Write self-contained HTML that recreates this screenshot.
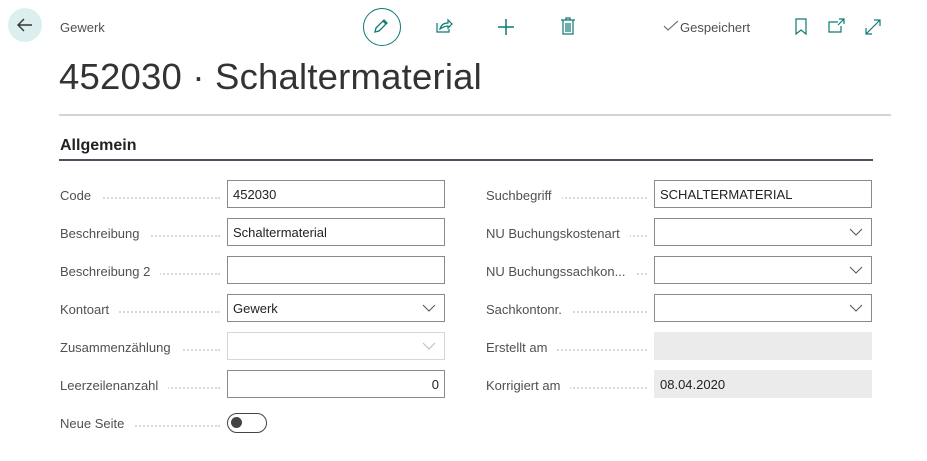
<!DOCTYPE html>
<html><head><meta charset="utf-8"><style>
body{margin:0;width:927px;height:461px;background:#fff;font-family:"Liberation Sans",sans-serif;color:#333;position:relative;overflow:hidden}
.a{position:absolute}
.lbl{position:absolute;font-size:13px;color:#505050;white-space:nowrap;overflow:hidden}
.lbl span{background:#fff;padding-right:10px;position:relative;z-index:1}
.lbl:after{content:"";position:absolute;left:0;right:6px;top:9px;border-bottom:2px dotted #d8d8d8}
.in{position:absolute;height:26px;border:1px solid #8a8a8a;font-size:13px;color:#222;line-height:28px;padding-left:5px;box-sizing:content-box;width:211px}
.dis{border-color:#d6d6d6}
.ro{border:1px solid #ebebeb;background:#ebebeb}
.chev{position:absolute;right:8px;top:7px}
</style></head><body>
<div class="a" style="left:8px;top:8px;width:34px;height:34px;border-radius:50%;background:#dcefef"></div>
<svg class="a" style="left:15px;top:15px" width="20" height="20" viewBox="0 0 20 20"><path d="M17 10H3M9 4L3 10l6 6" stroke="#333" stroke-width="1.4" fill="none"/></svg>
<div class="a" style="left:60px;top:20px;font-size:13px;color:#505050">Gewerk</div>
<div class="a" style="left:363px;top:8px;width:36px;height:36px;border:1.3px solid #0b7a75;border-radius:50%"></div>
<svg class="a" style="left:372px;top:17px" width="18" height="18" viewBox="0 0 18 18"><path d="M3 15l1-4 8-8 3 3-8 8z M11 4l3 3" stroke="#0b7a75" stroke-width="1.3" fill="none"/></svg>
<svg class="a" style="left:435px;top:18px" width="18" height="16" viewBox="0 0 18 16"><path d="M2 5v9h12v-3 M5 11c1-4 4-6 8-6V2l4 4-4 4V8c-3 0-5 1-8 3z" stroke="#0b7a75" stroke-width="1.2" fill="none"/></svg>
<svg class="a" style="left:497px;top:18px" width="18" height="18"><path d="M9 1v16M1 9h16" stroke="#0b7a75" stroke-width="1.5"/></svg>
<svg class="a" style="left:560px;top:17px" width="16" height="18" viewBox="0 0 16 18"><path d="M1 3h14M6 3V1h4v2M3 3v14h10V3M6 6v9M8 6v9M10 6v9" stroke="#0b7a75" stroke-width="1.2" fill="none"/></svg>
<svg class="a" style="left:663px;top:20px" width="16" height="12"><path d="M1 6l4 4L15 1" stroke="#666" stroke-width="1.1" fill="none"/></svg>
<div class="a" style="left:680px;top:20px;font-size:13px;color:#505050">Gespeichert</div>
<svg class="a" style="left:794px;top:18px" width="14" height="18"><path d="M2 1h10v15l-5-4-5 4z" stroke="#0b7a75" stroke-width="1.2" fill="none"/></svg>
<svg class="a" style="left:828px;top:18px" width="18" height="16"><path d="M10 4H1v10h12V8 M11 1h5v5M16 1l-6 6" stroke="#0b7a75" stroke-width="1.2" fill="none"/></svg>
<svg class="a" style="left:864px;top:18px" width="18" height="18"><path d="M2 16L16 2M10 2h6v6M2 10v6h6" stroke="#0b7a75" stroke-width="1.2" fill="none"/></svg>
<div class="a" style="left:59px;top:56px;font-size:36.5px;color:#333;letter-spacing:0.2px">452030 · Schaltermaterial</div>
<div class="a" style="left:59px;top:114px;width:832px;height:2px;background:#d4d4d4"></div>
<div class="a" style="left:60px;top:137px;font-size:16px;font-weight:bold;color:#222">Allgemein</div>
<div class="a" style="left:59px;top:159px;width:814px;height:2px;background:#4a5160"></div>

<div class="lbl" style="left:60px;top:188px;width:166px"><span>Code</span></div>
<div class="in" style="left:227px;top:180px">452030</div>
<div class="lbl" style="left:60px;top:226px;width:166px"><span>Beschreibung</span></div>
<div class="in" style="left:227px;top:218px">Schaltermaterial</div>
<div class="lbl" style="left:60px;top:264px;width:166px"><span>Beschreibung 2</span></div>
<div class="in" style="left:227px;top:256px"></div>
<div class="lbl" style="left:60px;top:302px;width:166px"><span>Kontoart</span></div>
<div class="in" style="left:227px;top:294px">Gewerk<svg class="chev" width="14" height="12"><path d="M1 3l6 6 6-6" stroke="#555" fill="none"/></svg></div>
<div class="lbl" style="left:60px;top:340px;width:166px"><span>Zusammenzählung</span></div>
<div class="in dis" style="left:227px;top:332px"><svg class="chev" width="14" height="12"><path d="M1 3l6 6 6-6" stroke="#bbb" fill="none"/></svg></div>
<div class="lbl" style="left:60px;top:378px;width:166px"><span>Leerzeilenanzahl</span></div>
<div class="in" style="left:227px;top:370px;text-align:right;padding:0 5px 0 0">0</div>
<div class="lbl" style="left:60px;top:416px;width:166px"><span>Neue Seite</span></div>
<div class="a" style="left:227px;top:413px;width:38px;height:18px;border:1.3px solid #444;border-radius:10px"></div>
<div class="a" style="left:231px;top:417px;width:11px;height:11px;border-radius:50%;background:#444"></div>

<div class="lbl" style="left:486px;top:188px;width:167px"><span>Suchbegriff</span></div>
<div class="in" style="left:654px;top:180px">SCHALTERMATERIAL</div>
<div class="lbl" style="left:486px;top:226px;width:167px"><span>NU Buchungskostenart</span></div>
<div class="in" style="left:654px;top:218px"><svg class="chev" width="14" height="12"><path d="M1 3l6 6 6-6" stroke="#555" fill="none"/></svg></div>
<div class="lbl" style="left:486px;top:264px;width:167px"><span>NU Buchungssachkon...</span></div>
<div class="in" style="left:654px;top:256px"><svg class="chev" width="14" height="12"><path d="M1 3l6 6 6-6" stroke="#555" fill="none"/></svg></div>
<div class="lbl" style="left:486px;top:302px;width:167px"><span>Sachkontonr.</span></div>
<div class="in" style="left:654px;top:294px"><svg class="chev" width="14" height="12"><path d="M1 3l6 6 6-6" stroke="#555" fill="none"/></svg></div>
<div class="lbl" style="left:486px;top:340px;width:167px"><span>Erstellt am</span></div>
<div class="in ro" style="left:654px;top:332px"></div>
<div class="lbl" style="left:486px;top:378px;width:167px"><span>Korrigiert am</span></div>
<div class="in ro" style="left:654px;top:370px">08.04.2020</div>
</body></html>
